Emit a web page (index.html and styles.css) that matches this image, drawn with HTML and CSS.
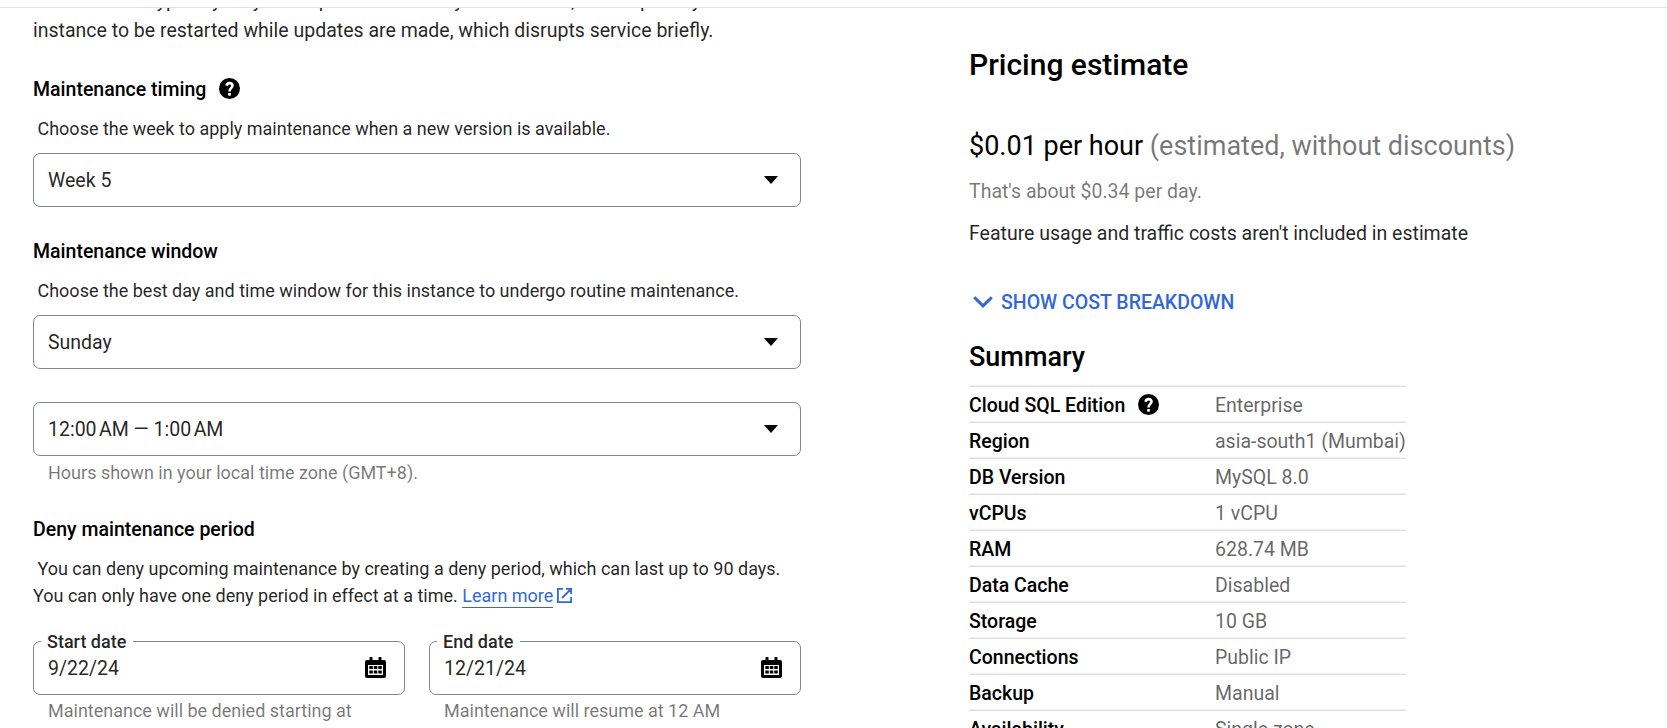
FILE: index.html
```
<!DOCTYPE html>
<html lang="en">
<head>
<meta charset="utf-8">
<title>Create an instance</title>
<link rel="stylesheet" href="styles.css">
</head>
<body>
<svg class="defs" aria-hidden="true">
  <symbol id="help" viewBox="2 2 20 20"><circle cx="12" cy="12" r="10"/><path d="M9.200 9.300a2.900 2.900 0 0 1 5.700-.1c0 2.200-2.900 2.400-2.900 5.700" fill="none" stroke="#fff" stroke-width="2.500"/><path d="M10.700 16.300h2.600v2.500h-2.600z" fill="#fff"/></symbol>
  <symbol id="calendar" viewBox="0 0 21 21"><path fill-rule="evenodd" d="M4.500 1a1 1 0 0 1 3 0V3h6V1a1 1 0 0 1 3 0V3H19a2 2 0 0 1 2 2v14a2 2 0 0 1-2 2H2a2 2 0 0 1-2-2V5a2 2 0 0 1 2-2h2.500zM3 8v10h15V8z"/><path d="M4.300 9h3.500v3H4.300zM8.800 9h3.500v3H8.800zM13.300 9h3.500v3h-3.500zM4.300 13.500h3.500v3H4.300zM8.800 13.500h3.500v3H8.800zM13.300 13.500h3.500v3h-3.500z"/></symbol>
</svg>
<div class="page">
  <header class="topbar"></header>
  <div class="content">
    <main class="form">
      <p class="intro">Maintenance typically only takes place once every few months, and requires your<br>instance to be restarted while updates are made, which disrupts service briefly.</p>

      <h3 class="heading heading-timing">Maintenance timing <svg class="help"><use href="#help"/></svg></h3>
      <p class="desc">&nbsp;Choose the week to apply maintenance when a new version is available.</p>
      <div class="select"><span>Week 5</span><i class="arrow"></i></div>

      <h3 class="heading">Maintenance window</h3>
      <p class="desc">&nbsp;Choose the best day and time window for this instance to undergo routine maintenance.</p>
      <div class="select"><span>Sunday</span><i class="arrow"></i></div>
      <div class="select select-time"><span>12:00&#8239;AM — 1:00&#8239;AM</span><i class="arrow"></i></div>
      <p class="hint">Hours shown in your local time zone (GMT+8).</p>

      <h3 class="heading heading-deny">Deny maintenance period</h3>
      <p class="desc">&nbsp;You can deny upcoming maintenance by creating a deny period, which can last up to 90 days.<br>You can only have one deny period in effect at a time. <a class="link" href="#">Learn more</a><svg class="external" viewBox="0 0 15 15"><path d="M6 .9H.9v13.200h13.200V9M9 .9h5.100V6M14 1L5 10"/></svg></p>

      <div class="dates">
        <div class="date">
          <div class="field"><label class="label">Start date</label><span>9/22/24</span><svg class="calendar"><use href="#calendar"/></svg></div>
          <p class="hint">Maintenance will be denied starting at</p>
        </div>
        <div class="date">
          <div class="field"><label class="label">End date</label><span>12/21/24</span><svg class="calendar"><use href="#calendar"/></svg></div>
          <p class="hint">Maintenance will resume at 12 AM</p>
        </div>
      </div>
    </main>

    <aside class="pricing">
      <h1 class="title">Pricing estimate</h1>
      <p class="price">$0.01 per hour <span class="muted">(estimated, without discounts)</span></p>
      <p class="daily muted">That's about $0.34 per day.</p>
      <p class="note">Feature usage and traffic costs aren't included in estimate</p>
      <div class="breakdown"><svg class="chevron" viewBox="0 0 20 12"><path d="M1.200 1.200L10 9.900l8.800-8.700"/></svg>SHOW COST BREAKDOWN</div>
      <h2 class="summary-title">Summary</h2>
      <dl class="summary">
        <div class="row"><dt>Cloud SQL Edition <svg class="help"><use href="#help"/></svg></dt><dd>Enterprise</dd></div>
        <div class="row"><dt>Region</dt><dd>asia-south1 (Mumbai)</dd></div>
        <div class="row"><dt>DB Version</dt><dd>MySQL 8.0</dd></div>
        <div class="row"><dt>vCPUs</dt><dd>1 vCPU</dd></div>
        <div class="row"><dt>RAM</dt><dd>628.74 MB</dd></div>
        <div class="row"><dt>Data Cache</dt><dd>Disabled</dd></div>
        <div class="row"><dt>Storage</dt><dd>10 GB</dd></div>
        <div class="row"><dt>Connections</dt><dd>Public IP</dd></div>
        <div class="row"><dt>Backup</dt><dd>Manual</dd></div>
        <div class="row"><dt>Availability</dt><dd>Single zone</dd></div>
      </dl>
    </aside>
  </div>
</div>
</body>
</html>
```
FILE: styles.css
```
* { box-sizing: border-box; }

body, p, h1, h2, h3, dl, dd { margin: 0; }

body {
  font-family: Roboto, sans-serif;
  font-size: 19.5px;
  line-height: 30px;
  color: #000;
  background: #fff;
}

.defs { display: block; width: 0; height: 0; }

.page {
  display: flex;
  flex-direction: column;
  height: 728px;
  overflow: hidden;
}

.topbar {
  flex: none;
  height: 8px;
  border-bottom: 1px solid #e0e0e0;
}

.content {
  display: flex;
  flex: 1;
  min-height: 0;
  overflow: hidden;
}

/* Form column */
.form {
  flex: none;
  width: 768px;
  margin-left: 33px;
}

.intro {
  margin-top: -22px;
  color: rgba(0, 0, 0, 0.87);
  white-space: nowrap;
}

.heading {
  display: flex;
  align-items: center;
  margin-top: 30px;
  font-size: 19.5px;
  font-weight: 500;
}

.heading-timing,
.heading-deny { margin-top: 29px; }

.help {
  width: 21px;
  height: 21px;
  margin: 0 0 3px 12.500px;
}

.desc {
  margin-top: 10px;
  font-size: 18px;
  line-height: 27px;
  color: rgba(0, 0, 0, 0.87);
  white-space: nowrap;
}

.select,
.field {
  position: relative;
  display: flex;
  align-items: center;
  justify-content: space-between;
  height: 54px;
  padding: 0 22px 0 14px;
  border: 1px solid #80868b;
  border-radius: 7px;
  color: rgba(0, 0, 0, 0.87);
}

.select span,
.field span { padding-top: 2px; }

.select { margin-top: 11px; }

.select-time { margin-top: 33px; }

.arrow {
  border: 7.500px solid transparent;
  border-top-color: #000;
  border-bottom: 0;
  border-top-width: 8px;
}

.hint {
  margin: 3px 0 0 15px;
  font-size: 18px;
  line-height: 27px;
  color: rgba(0, 0, 0, 0.54);
  white-space: nowrap;
}

.date .hint { margin-top: 2px; }

.link {
  display: inline-block;
  height: 26px;
  color: #3367d6;
  text-decoration: none;
  border-bottom: 1px solid #3367d6;
}

.external {
  width: 15px;
  height: 15px;
  margin-left: 4px;
  vertical-align: -1px;
  fill: none;
  stroke: #3367d6;
  stroke-width: 1.8;
}

.dates {
  display: grid;
  grid-template-columns: 372px 372px;
  gap: 24px;
  margin-top: 32px;
}

.field { padding-right: 18px; }

/* Floating label that interrupts the top border */
.label {
  position: absolute;
  top: -14px;
  left: 7px;
  padding: 0 7px 0 6px;
  font-size: 18px;
  font-weight: 500;
  line-height: 27px;
  background: #fff;
}

.calendar {
  width: 21px;
  height: 21px;
  margin-bottom: 1px;
}

/* Pricing column */
.pricing {
  flex: none;
  margin-left: 168px;
  white-space: nowrap;
}

.title {
  margin-top: 36px;
  font-size: 30px;
  font-weight: 500;
  line-height: 42px;
}

.price {
  margin-top: 41px;
  font-size: 27px;
  line-height: 38px;
}

.muted { color: rgba(0, 0, 0, 0.54); }

.daily { margin-top: 12px; }

.note {
  margin-top: 12px;
  color: rgba(0, 0, 0, 0.87);
}

.breakdown {
  display: flex;
  align-items: center;
  margin-top: 39px;
  color: #3367d6;
  font-weight: 500;
}

.chevron {
  width: 20px;
  height: 12px;
  margin: 0 8px 3px 4px;
  fill: none;
  stroke: currentColor;
  stroke-width: 3;
}

.summary-title {
  margin-top: 21px;
  font-size: 27px;
  font-weight: 500;
  line-height: 36px;
}

.summary {
  width: 437px;
  margin-top: 10px;
}

.row {
  display: grid;
  grid-template-columns: 246px 1fr;
  height: 36px;
  padding-top: 5px;
  border-top: 1px solid #f0f0f0;
  box-shadow: inset 0 1px #e0e0e0;
}

.row dt {
  display: flex;
  align-items: center;
  height: 30px;
  font-weight: 500;
}

.row dd { color: rgba(0, 0, 0, 0.62); }
```
